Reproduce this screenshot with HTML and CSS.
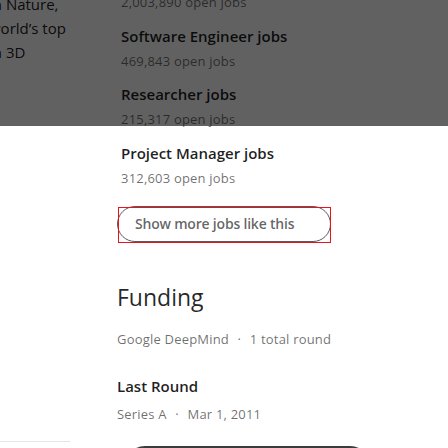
FILE: index.html
```html
<!DOCTYPE html>
<html lang="en">
<head>
<meta charset="utf-8">
<title>Jobs and funding</title>
<link rel="stylesheet" href="styles.css">
</head>
<body>
<div class="page">
  <aside class="side">
    <p class="side-text">in Nature,<br>world’s top<br>in 3D</p>
    <hr class="side-rule">
  </aside>
  <main class="main">
    <ul class="jobs">
      <li class="job"><span class="job-title">Data Scientist jobs</span><span class="job-count">2,003,890 open jobs</span></li>
      <li class="job"><span class="job-title">Software Engineer jobs</span><span class="job-count">469,843 open jobs</span></li>
      <li class="job"><span class="job-title">Researcher jobs</span><span class="job-count">215,317 open jobs</span></li>
      <li class="job"><span class="job-title">Project Manager jobs</span><span class="job-count">312,603 open jobs</span></li>
    </ul>
    <button class="more-btn" type="button">Show more jobs like this</button>
    <h2 class="funding-title">Funding</h2>
    <p class="meta">Google DeepMind <span class="dot">·</span> 1 total round</p>
    <h3 class="round-title">Last Round</h3>
    <p class="meta meta-round">Series A <span class="dot">·</span> Mar 1, 2011</p>
    <div class="next-btn"></div>
  </main>
  <div class="scrim"></div>
</div>
</body>
</html>
```
FILE: styles.css
```css
html, body {
  margin: 0;
  padding: 0;
  background: #ffffff;
}

body {
  font-family: "Open Sans", "Noto Sans", sans-serif;
  overflow: hidden;
}

.page {
  position: relative;
  display: flex;
  height: 448px;
  overflow: hidden;
}

.side {
  flex: 0 0 70px;
  display: flex;
  flex-direction: column;
  margin-top: -8px;
}

.side-text {
  margin: 0 0 0 -11px;
  font-size: 15px;
  line-height: 24px;
  color: rgba(0, 0, 0, 0.9);
  white-space: nowrap;
}

.side-rule {
  border: 0;
  border-top: 1px solid #e6e6e6;
  margin: 377px 0 0;
  height: 0;
}

.main {
  flex: 0 0 300px;
  margin-left: 47px;
  margin-top: -34px;
  display: flex;
  flex-direction: column;
  align-items: flex-start;
}

.main > * {
  flex-shrink: 0;
}

.jobs {
  list-style: none;
  margin: 0;
  padding: 0 0 0 4px;
  display: flex;
  flex-direction: column;
  gap: 12.5px;
}

.job {
  display: flex;
  flex-direction: column;
}

.job-title {
  font-size: 15px;
  font-weight: 600;
  line-height: 22px;
  color: rgba(0, 0, 0, 0.88);
}

.job-count {
  margin-top: 4px;
  font-size: 13px;
  letter-spacing: 0.2px;
  line-height: 20px;
  color: rgba(0, 0, 0, 0.58);
}

.more-btn {
  position: relative;
  margin-top: 18px;
  width: 214px;
  height: 36px;
  padding: 0 0 0 17px;
  text-align: left;
  background: #fff;
  border: 1px solid #5a5a5a;
  border-radius: 18px;
  font-family: inherit;
  font-size: 14px;
  letter-spacing: -0.2px;
  font-weight: 600;
  color: rgba(0, 0, 0, 0.62);
}

.more-btn::after {
  content: "";
  position: absolute;
  top: 0;
  left: 0;
  right: -1px;
  bottom: -2px;
  border: 1px solid #e8141b;
}

.funding-title {
  margin: 39px 0 0;
  font-size: 23px;
  line-height: 32px;
  font-weight: 400;
  color: rgba(0, 0, 0, 0.86);
}

.meta {
  margin: 16px 0 0;
  font-size: 13px;
  letter-spacing: 0.2px;
  line-height: 20px;
  color: rgba(0, 0, 0, 0.58);
}

.dot {
  margin: 0 5px;
}

.round-title {
  margin: 26px 0 0;
  font-size: 15px;
  line-height: 22px;
  font-weight: 600;
  color: rgba(0, 0, 0, 0.88);
}

.meta-round {
  margin-top: 7px;
}

.next-btn {
  margin: 22px 0 0 8px;
  width: 245px;
  height: 40px;
  border: 2px solid #3c3c3c;
  border-radius: 20px;
  box-sizing: border-box;
}

.scrim {
  position: absolute;
  top: 0;
  left: 0;
  right: 0;
  height: 126px;
  background: rgba(0, 0, 0, 0.62);
}
```
